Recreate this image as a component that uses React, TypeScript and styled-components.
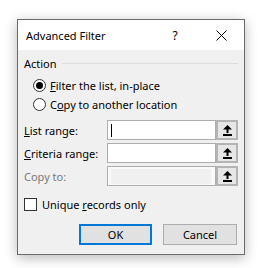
import React from 'react';
import styled, { createGlobalStyle } from 'styled-components';

const GlobalStyle = createGlobalStyle`
  body {
    margin: 0;
    background: #ffffff;
    font-family: 'Noto Sans', 'Segoe UI', sans-serif;
  }
`;

const Page = styled.div`
  width: 260px;
  height: 268px;
  box-sizing: border-box;
  padding: 19px 0 0 17px;
`;

const Dialog = styled.div`
  width: 228px;
  height: 236px;
  box-sizing: border-box;
  border: 1px solid #6b6b6b;
  background: #f0f0f0;
  box-shadow: 0 3px 12px rgba(0, 0, 0, 0.28);
  display: flex;
  flex-direction: column;
  font-size: 11px;
  color: #000;
`;

const TitleBar = styled.div`
  height: 30px;
  background: #ffffff;
  display: flex;
  align-items: center;
  padding-left: 8px;
`;

const Title = styled.div`
  flex: 1;
  font-size: 11px;
`;

const CaptionButton = styled.div`
  width: 46px;
  height: 30px;
  display: flex;
  align-items: center;
  justify-content: center;
  font-size: 12px;
`;

const Body = styled.div`
  flex: 1;
  display: flex;
  flex-direction: column;
  padding: 5px 6px 9px 6px;
`;

const GroupHeader = styled.div`
  height: 16px;
  display: flex;
  align-items: center;
  gap: 5px;
`;

const GroupLine = styled.div`
  flex: 1;
  height: 1px;
  background: #dcdcdc;
`;

const RadioList = styled.div`
  margin-top: 5px;
  padding-left: 9px;
  display: flex;
  flex-direction: column;
`;

const OptionRow = styled.label`
  height: 19px;
  display: flex;
  align-items: center;
  gap: 4px;
`;

const RadioCircle = styled.span<{ $checked?: boolean }>`
  width: 13px;
  height: 13px;
  box-sizing: border-box;
  border: 1px solid #333;
  border-radius: 50%;
  background: #fff;
  display: flex;
  align-items: center;
  justify-content: center;
  &::after {
    content: '';
    width: 7px;
    height: 7px;
    border-radius: 50%;
    background: #000;
    display: ${(p) => (p.$checked ? 'block' : 'none')};
  }
`;

const RangeGrid = styled.div`
  margin-top: 6px;
  display: grid;
  grid-template-columns: 83px 109px 22px;
  grid-auto-rows: 20px;
  row-gap: 3px;
  align-items: center;
`;

const FieldLabel = styled.div<{ $disabled?: boolean }>`
  color: ${(p) => (p.$disabled ? '#7a7a7a' : '#000')};
`;

const RangeBox = styled.div<{ $disabled?: boolean }>`
  height: 20px;
  box-sizing: border-box;
  border: 1px solid #adadad;
  background: ${(p) => (p.$disabled ? '#f9f9f9' : '#fff')};
  padding: ${(p) => (p.$disabled ? '2px 4px 1px 3px' : '2px 3px')};
  display: flex;
  align-items: center;
`;

const DisabledFill = styled.div`
  flex: 1;
  align-self: stretch;
  background: #f0f0f0;
`;

const Caret = styled.div`
  width: 1px;
  height: 13px;
  background: #000;
`;

const CollapseButton = styled.div`
  height: 20px;
  box-sizing: border-box;
  border: 2px solid #b4b4b4;
  background: #e6e6e6;
  display: flex;
  align-items: center;
  justify-content: center;
`;

const CheckRow = styled.label`
  margin-top: 9px;
  height: 19px;
  display: flex;
  align-items: center;
  gap: 5px;
`;

const CheckBox = styled.span`
  width: 13px;
  height: 13px;
  box-sizing: border-box;
  border: 1px solid #333;
  background: #fff;
`;

const ButtonRow = styled.div`
  margin-top: 10px;
  padding-right: 1px;
  display: flex;
  justify-content: flex-end;
  gap: 11px;
`;

const PushButton = styled.div<{ $default?: boolean; $width: number }>`
  width: ${(p) => p.$width}px;
  height: 21px;
  box-sizing: border-box;
  border: ${(p) => (p.$default ? '2px solid #0078d7' : '1px solid #adadad')};
  background: #e1e1e1;
  display: flex;
  align-items: center;
  justify-content: center;
`;

function CloseIcon() {
  return (
    <svg width="11" height="11" viewBox="0 0 11 11">
      <path d="M0.5 0.5 L10.5 10.5 M10.5 0.5 L0.5 10.5" stroke="#000" strokeWidth="1" fill="none" />
    </svg>
  );
}

function UpArrowIcon() {
  return (
    <svg width="9" height="11" viewBox="0 0 9 11">
      <path d="M4.5 0 L9 4.5 L0 4.5 Z" fill="#000" />
      <rect x="3.5" y="4" width="2" height="4" fill="#000" />
      <rect x="0" y="9" width="9" height="2" fill="#000" />
    </svg>
  );
}

const ranges = [
  { key: 'list', label: <><u>L</u>ist range:</>, caret: true },
  { key: 'criteria', label: <><u>C</u>riteria range:</> },
  { key: 'copy', label: <>Copy to:</>, disabled: true },
];

export default function App() {
  return (
    <Page>
      <GlobalStyle />
      <Dialog>
        <TitleBar>
          <Title>Advanced Filter</Title>
          <CaptionButton>?</CaptionButton>
          <CaptionButton>
            <CloseIcon />
          </CaptionButton>
        </TitleBar>
        <Body>
          <GroupHeader>
            <span>Action</span>
            <GroupLine />
          </GroupHeader>
          <RadioList>
            <OptionRow>
              <RadioCircle $checked />
              <span><u>F</u>ilter the list, in-place</span>
            </OptionRow>
            <OptionRow>
              <RadioCircle />
              <span>C<u>o</u>py to another location</span>
            </OptionRow>
          </RadioList>
          <RangeGrid>
            {ranges.map((r) => (
              <React.Fragment key={r.key}>
                <FieldLabel $disabled={r.disabled}>{r.label}</FieldLabel>
                <RangeBox $disabled={r.disabled}>
                  {r.caret && <Caret />}
                  {r.disabled && <DisabledFill />}
                </RangeBox>
                <CollapseButton>
                  <UpArrowIcon />
                </CollapseButton>
              </React.Fragment>
            ))}
          </RangeGrid>
          <CheckRow>
            <CheckBox />
            <span>Unique <u>r</u>ecords only</span>
          </CheckRow>
          <ButtonRow>
            <PushButton $default $width={73}>OK</PushButton>
            <PushButton $width={74}>Cancel</PushButton>
          </ButtonRow>
        </Body>
      </Dialog>
    </Page>
  );
}
